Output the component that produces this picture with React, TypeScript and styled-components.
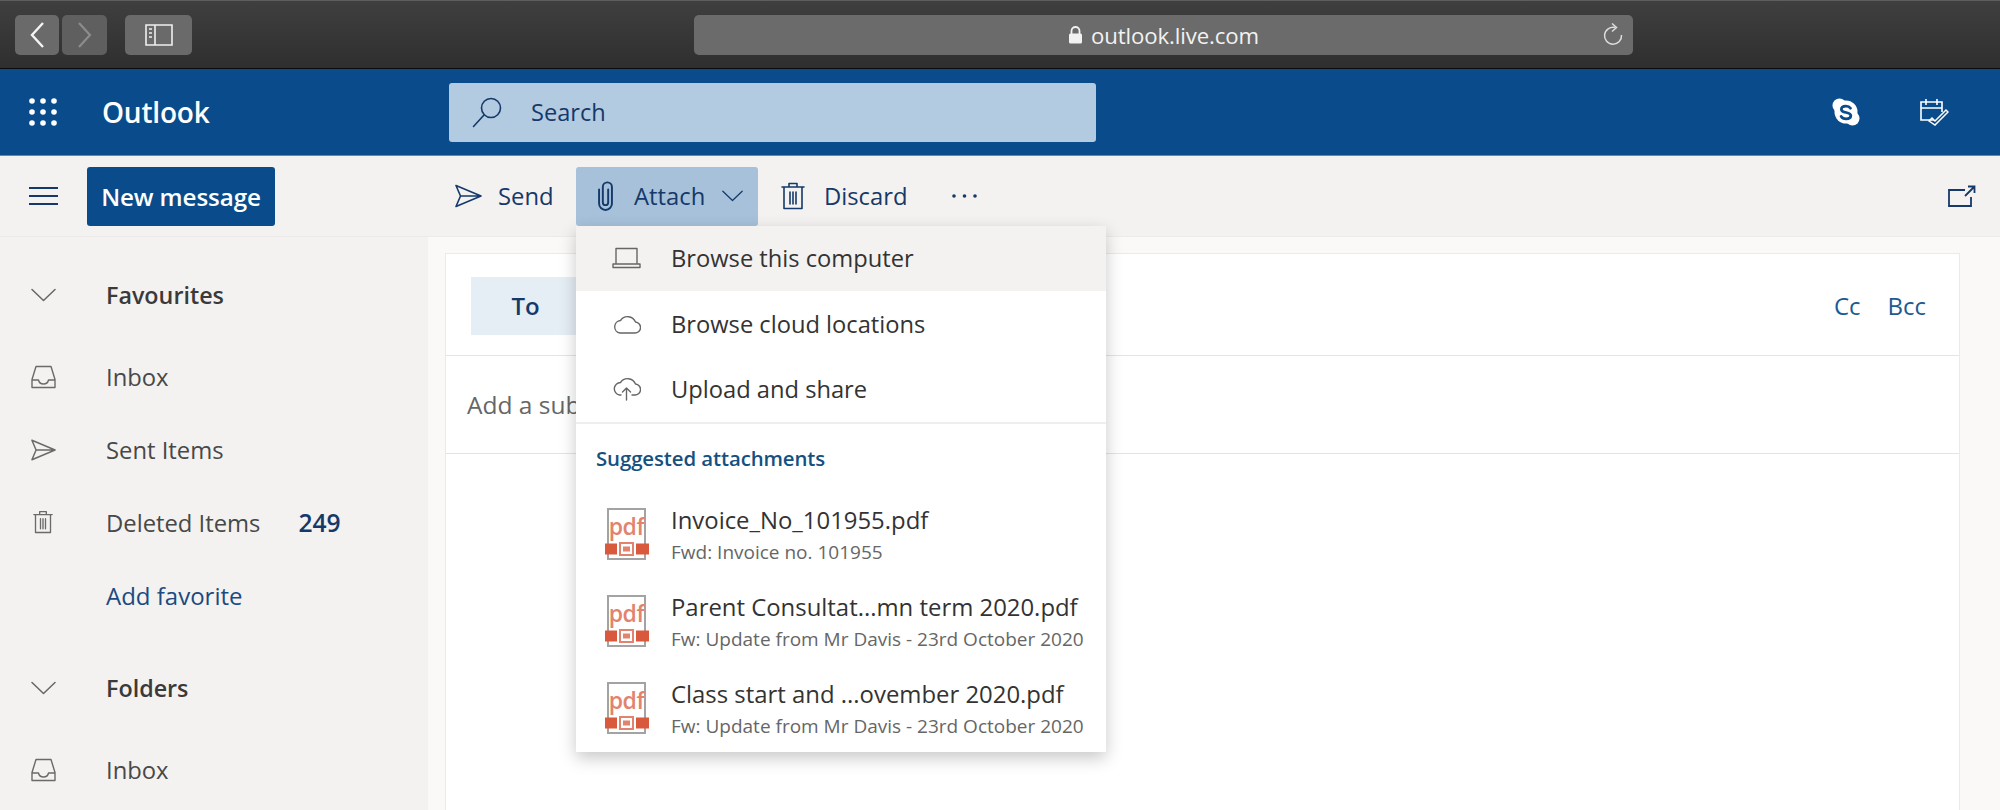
import React from 'react';
import styled, { createGlobalStyle } from 'styled-components';

const Colors = {
	brand: '#0a4c8b',
	navy: '#15396a',
	text: '#333333',
	muted: '#666666',
	pane: '#f3f2f1',
	paneLight: '#faf9f8',
	line: '#e6e5e4',
};

const GlobalStyle = createGlobalStyle`
	html, body {
		margin: 0;
		padding: 0;
		background: #fff;
		font-family: "Open Sans", "Noto Sans", sans-serif;
	}
	* { box-sizing: border-box; }
`;

const Page = styled.div`
	width: 2000px;
	height: 810px;
	overflow: hidden;
	display: flex;
	flex-direction: column;
`;

/* browser chrome */
const BrowserBar = styled.div`
	height: 69px;
	flex: none;
	display: flex;
	align-items: flex-start;
	padding: 14px 0 0 15px;
	background: linear-gradient(#3f3f3f, #2f2f2f);
	border-top: 1px solid #5e5e5e;
	border-bottom: 1px solid #0c0c0c;
`;

const ChromeButton = styled.div<{ $w: number; $gap: number; $dim?: boolean }>`
	width: ${(p) => p.$w}px;
	height: 40px;
	margin-right: ${(p) => p.$gap}px;
	border-radius: 5px;
	background: ${(p) => (p.$dim ? '#5f5f5f' : '#6a6a6a')};
	display: flex;
	align-items: center;
	justify-content: center;
`;

const AddressBar = styled.div`
	width: 939px;
	height: 40px;
	margin-left: 502px;
	border-radius: 5px;
	background: #6b6b6b;
	position: relative;
	display: flex;
	align-items: center;
	justify-content: center;
	gap: 8px;
	color: #f2f2f2;
	font-size: 22.2px;
	letter-spacing: -0.1px;
`;

const ReloadSlot = styled.div`
	position: absolute;
	right: 9px;
	top: 8px;
	height: 24px;
	display: flex;
`;

/* blue app header */
const Header = styled.div`
	height: 87px;
	flex: none;
	display: flex;
	align-items: center;
	background: ${Colors.brand};
	border-bottom: 1px solid #5b8ab8;
`;

const Brand = styled.div`
	width: 449px;
	flex: none;
	display: flex;
	align-items: center;
	padding-left: 29px;
	gap: 45px;
	color: #fff;
	font-size: 28px;
	font-weight: 600;
	letter-spacing: -0.2px;
`;

const SearchBox = styled.div`
	width: 647px;
	height: 59px;
	flex: none;
	display: flex;
	align-items: center;
	gap: 29px;
	padding-left: 23px;
	border-radius: 3px;
	background: #b3cbe1;
	color: ${Colors.navy};
	font-size: 23.6px;
`;

const HeaderIcons = styled.div`
	margin-left: auto;
	display: flex;
	align-items: center;
	gap: 59px;
	padding-right: 51px;
	color: #fff;
`;

/* command bar */
const Toolbar = styled.div`
	height: 81px;
	flex: none;
	display: flex;
	align-items: center;
	background: ${Colors.pane};
	border-bottom: 1px solid #ecebea;
	color: ${Colors.navy};
	font-size: 23.8px;
	position: relative;
	z-index: 5;
`;

const ToolbarLeft = styled.div`
	width: 449px;
	flex: none;
	display: flex;
	align-items: center;
	padding-left: 29px;
	gap: 29px;
`;

const NewMessage = styled.div`
	width: 188px;
	height: 59px;
	display: flex;
	align-items: center;
	justify-content: center;
	border-radius: 3px;
	background: ${Colors.brand};
	color: #fff;
	font-size: 24.2px;
	font-weight: 600;
	letter-spacing: -0.1px;
`;

const Action = styled.div<{ $w: number; $active?: boolean; $gap?: number }>`
	width: ${(p) => p.$w}px;
	height: 59px;
	display: flex;
	align-items: center;
	gap: ${(p) => p.$gap ?? 16}px;
	padding-left: ${(p) => (p.$active ? 22 : 6)}px;
	border-radius: 3px;
	background: ${(p) => (p.$active ? '#a7c1da' : 'transparent')};
`;

const AttachWrap = styled.div`
	position: relative;
	margin-left: 17px;
	margin-right: 17px;
`;

const ChevronShift = styled.span`
	margin-left: -4px;
	display: flex;
`;

const MoreDots = styled.div`
	margin-left: 43px;
	display: flex;
`;

const PopOut = styled.div`
	margin-left: auto;
	padding-right: 24px;
	display: flex;
`;

/* attach dropdown */
const Menu = styled.div`
	position: absolute;
	top: 100%;
	left: 0;
	width: 530px;
	height: 526px;
	background: #fff;
	box-shadow: 0 6px 16px rgba(0, 0, 0, 0.22);
	z-index: 10;
`;

const MenuRow = styled.div<{ $hover?: boolean }>`
	height: 65.5px;
	display: flex;
	align-items: center;
	padding-left: 36px;
	gap: 30px;
	background: ${(p) => (p.$hover ? Colors.pane : '#fff')};
	color: ${Colors.text};
	font-size: 23.7px;
`;

const MenuDivider = styled.div`
	height: 2px;
	background: #eeeeee;
`;

const MenuHeading = styled.div`
	height: 69px;
	display: flex;
	align-items: center;
	padding: 0 0 2px 20px;
	color: #15507f;
	font-size: 20.4px;
	font-weight: 600;
	letter-spacing: -0.1px;
`;

const AttachmentRow = styled.div`
	height: 87px;
	display: flex;
	align-items: flex-start;
	padding: 14px 0 0 29px;
	gap: 22px;
	&:last-child {
		height: 85px;
	}
`;

const AttachmentText = styled.div`
	margin-top: -4px;
	display: flex;
	flex-direction: column;
	white-space: nowrap;
`;

const AttachmentName = styled.div`
	height: 33px;
	line-height: 33px;
	color: ${Colors.text};
	font-size: 23.9px;
`;

const AttachmentSub = styled.div`
	height: 33px;
	line-height: 33px;
	color: ${Colors.muted};
	font-size: 19px;
`;

/* lower part */
const Body = styled.div`
	flex: 1;
	min-height: 0;
	display: flex;
	background: ${Colors.paneLight};
`;

const Sidebar = styled.div`
	width: 428px;
	flex: none;
	padding: 21px 0 0 31px;
	background: ${Colors.pane};
	font-size: 23.8px;
	color: #444;
`;

const SidebarRow = styled.div<{ $head?: boolean; $link?: boolean; $last?: boolean }>`
	height: 73px;
	display: flex;
	align-items: center;
	font-size: ${(p) => (p.$head ? 23.3 : p.$link ? 24 : 23.8)}px;
	font-weight: ${(p) => (p.$head ? 600 : 400)};
	color: ${(p) => (p.$head ? '#3a3a3a' : p.$link ? '#1c4a80' : '#484848')};
	margin-bottom: ${(p) => (p.$head ? 9 : p.$last ? 19 : 0)}px;
`;

const IconSlot = styled.div`
	width: 75px;
	flex: none;
	display: flex;
`;

const TrashOffset = styled.span`
	margin-left: 2px;
	display: flex;
`;

const Count = styled.span`
	margin-left: 38px;
	color: ${Colors.navy};
	font-size: 24.6px;
	font-weight: 600;
`;

const Compose = styled.div`
	width: 1515px;
	margin: 16px 0 0 17px;
	background: #fff;
	border: 1px solid #eaeaea;
	border-bottom: 0;
`;

const RecipientRow = styled.div`
	height: 102px;
	display: flex;
	align-items: flex-start;
	padding: 23px 33px 0 25px;
	border-bottom: 1px solid #e4e4e4;
	font-size: 24px;
`;

const ToChip = styled.div`
	width: 106px;
	height: 58px;
	display: flex;
	align-items: center;
	justify-content: center;
	padding: 0 0 2px 3px;
	background: #e6eef5;
	color: ${Colors.navy};
	font-weight: 600;
`;

const CopyLinks = styled.div`
	margin-left: auto;
	height: 58px;
	padding-bottom: 2px;
	display: flex;
	align-items: center;
	gap: 27px;
	color: #1c5a92;
`;

const SubjectRow = styled.div`
	height: 98px;
	display: flex;
	align-items: center;
	padding-left: 21px;
	border-bottom: 1px solid #e4e4e4;
	color: ${Colors.muted};
	font-size: 24.5px;
`;

/* drawings */
const Line = {
	fill: 'none',
	stroke: 'currentColor',
	strokeWidth: 1.6,
	strokeLinejoin: 'round' as const,
	strokeLinecap: 'round' as const,
};

const Chevron = ({ w, color }: { w: number; color: string }) => (
	<svg width={w} height={w * 0.56} viewBox="0 0 25 14" style={{ color }}>
		<path d="M1 1.5 12.5 12.5 24 1.5" {...Line} strokeWidth={1.5} />
	</svg>
);

const SendIcon = ({ color, w = 27 }: { color: string; w?: number }) => (
	<svg width={w} height={24} viewBox="0 0 27 24" style={{ color }}>
		<path d="M1 1.5 26 12 1 22.5 5.500 12zM5.500 12H26" {...Line} />
	</svg>
);

const TrashIcon = ({ color, w = 24, h = 29 }: { color: string; w?: number; h?: number }) => (
	<svg width={w} height={h} viewBox="0 0 24 29" style={{ color }}>
		<path d="M1 5h22M8 5V1.500h8V5M3 5v21.500h18V5M9 10v12M12 10v12M15 10v12" {...Line} />
	</svg>
);

const InboxIcon = () => (
	<svg width={25} height={24} viewBox="0 0 25 24" style={{ color: '#6a6a6a' }}>
		<path d="M5 1.500h15l4 13v8H1v-8zM1 15h6.500c.5 2.500 2.500 4 5 4s4.500-1.500 5-4H24" {...Line} strokeWidth={1.4} />
	</svg>
);

const SkypeLogo = () => (
	<svg width={28} height={28} viewBox="0 0 28 28">
		<circle cx="14" cy="14" r="11.500" fill="#fff" />
		<circle cx="7.500" cy="7.500" r="7" fill="#fff" />
		<circle cx="20.500" cy="20.500" r="7" fill="#fff" />
		<path
			d="M18.500 10.200c-1-1.400-2.600-2-4.600-2-2.800 0-4.500 1.400-4.500 3.200 0 4 9.400 2.200 9.400 6.200 0 1.900-1.900 3.300-4.700 3.300-2.400 0-4-.8-5-2.500"
			fill="none"
			stroke={Colors.brand}
			strokeWidth={2.8}
			strokeLinecap="round"
		/>
	</svg>
);

const Pdf = () => (
	<svg width={44} height={54} viewBox="0 0 44 54">
		<path d="M3 37V2h37v35M3 47v5h37v-5" fill="none" stroke="#a3a3a3" strokeWidth={2} />
		<text x="21.500" y="28" textAnchor="middle" fontFamily="Open Sans, sans-serif" fontSize="23" fontWeight="600" letterSpacing="-0.5" fill="#e2836e">pdf</text>
		<rect x="0" y="36.500" width="12" height="11" fill="#d9593c" />
		<rect x="31" y="36.500" width="13" height="11" fill="#d9593c" />
		<rect x="15" y="36" width="13" height="12" fill="none" stroke="#e2836e" strokeWidth={2} />
		<rect x="18" y="39.500" width="7" height="5" fill="#e2836e" />
	</svg>
);

const attachments = [
	{ name: 'Invoice_No_101955.pdf', sub: 'Fwd: Invoice no. 101955' },
	{ name: 'Parent Consultat...mn term 2020.pdf', sub: 'Fw: Update from Mr Davis - 23rd October 2020' },
	{ name: 'Class start and ...ovember 2020.pdf', sub: 'Fw: Update from Mr Davis - 23rd October 2020' },
];

export default function App() {
	return (
		<Page>
			<GlobalStyle />
			<BrowserBar>
				<ChromeButton $w={44} $gap={3}>
					<svg width={16} height={28} viewBox="0 0 16 28">
						<path d="M14 2 3 14l11 12" fill="none" stroke="#f4f4f4" strokeWidth={2.4} />
					</svg>
				</ChromeButton>
				<ChromeButton $w={45} $gap={18} $dim>
					<svg width={16} height={28} viewBox="0 0 16 28">
						<path d="M2 2l11 12L2 26" fill="none" stroke="#8c8c8c" strokeWidth={2.2} />
					</svg>
				</ChromeButton>
				<ChromeButton $w={67} $gap={0}>
					<svg width={28} height={22} viewBox="0 0 28 22">
						<path d="M1 1h26v20H1zM10 1v20" fill="none" stroke="#efefef" strokeWidth={1.6} />
						<path d="M4 5h3M4 9h3M4 13h3" stroke="#efefef" strokeWidth={1.6} />
					</svg>
				</ChromeButton>
				<AddressBar>
					<svg width={15} height={18} viewBox="0 0 15 18">
						<path d="M3.500 8V5a4 4 0 0 1 8 0v3" fill="none" stroke="#f2f2f2" strokeWidth={1.8} />
						<rect x="1" y="7.500" width="13" height="10" rx="1.500" fill="#f2f2f2" />
					</svg>
					outlook.live.com
					<ReloadSlot>
						<svg width={22} height={24} viewBox="0 0 22 24">
							<path d="M13 4.500A8.500 8.500 0 1 0 19.500 12" fill="none" stroke="#dcdcdc" strokeWidth={1.5} />
							<path d="M10 .5l4.500 4-4.500 4" fill="none" stroke="#dcdcdc" strokeWidth={1.5} />
						</svg>
					</ReloadSlot>
				</AddressBar>
			</BrowserBar>

			<Header>
				<Brand>
					<svg width={28} height={28} viewBox="0 0 28 28" fill="#fff">
						{[3, 14, 25].flatMap((y) =>
							[3, 14, 25].map((x) => <circle key={`${x}-${y}`} cx={x} cy={y} r={2.8} />),
						)}
					</svg>
					Outlook
				</Brand>
				<SearchBox>
					<svg width={30} height={31} viewBox="0 0 30 31" style={{ color: Colors.navy }}>
						<circle cx="19" cy="11" r="9.500" {...Line} />
						<path d="M12 18 1.500 29.500" {...Line} />
					</svg>
					Search
				</SearchBox>
				<HeaderIcons>
					<SkypeLogo />
					<svg width={30} height={30} viewBox="0 0 30 30">
						<path d="M15 23H2V5h21v10M2 11h21M7 2v6M18 2v6" fill="none" stroke="#fff" strokeWidth={1.6} />
						<path d="M10 24l3-3 3 3 11-11 2 2-13 13z" fill="none" stroke="#fff" strokeWidth={1.5} />
					</svg>
				</HeaderIcons>
			</Header>

			<Toolbar>
				<ToolbarLeft>
					<svg width={29} height={18} viewBox="0 0 29 18" style={{ color: Colors.navy, flex: 'none' }}>
						<path d="M0 1h29M0 9h29M0 17h29" stroke="currentColor" strokeWidth={1.8} />
					</svg>
					<NewMessage>New message</NewMessage>
				</ToolbarLeft>
				<Action $w={110} $gap={16}>
					<SendIcon color={Colors.navy} />
					Send
				</Action>
				<AttachWrap>
					<Action $w={182} $active $gap={21}>
						<svg width={15} height={30} viewBox="0 0 14 28" style={{ color: Colors.navy }}>
							<path d="M9.500 8V20a2.500 2.500 0 0 1-5 0V5.500a4.250 4.250 0 0 1 8.500 0V21a6 6 0 0 1-12 0V8" {...Line} strokeWidth={1.8} />
						</svg>
						Attach
						<ChevronShift>
							<Chevron w={21} color={Colors.navy} />
						</ChevronShift>
					</Action>
					<Menu>
						<MenuRow $hover>
							<svg width={29} height={22} viewBox="0 0 29 22" style={{ color: '#666', flex: 'none' }}>
								<path d="M4 16V1.500h21V16M1 17h27v3.500H1z" {...Line} strokeWidth={1.4} />
							</svg>
							Browse this computer
						</MenuRow>
						<MenuRow>
							<svg width={29} height={20} viewBox="0 0 29 20" style={{ color: '#666', flex: 'none' }}>
								<path d="M8 19h14.500a5.500 5.500 0 0 0 1-11A8.500 8.500 0 0 0 8.500 6.500 6.300 6.300 0 0 0 8 19z" {...Line} strokeWidth={1.4} />
							</svg>
							Browse cloud locations
						</MenuRow>
						<MenuRow>
							<svg width={29} height={24} viewBox="0 0 29 24" style={{ color: '#666', flex: 'none' }}>
								<path d="M9 18H7.500A6.300 6.300 0 0 1 8.500 5.500 8.500 8.500 0 0 1 23.500 7a5.500 5.500 0 0 1-1 11H20M14.500 23V11M10.500 15l4-4 4 4" {...Line} strokeWidth={1.4} />
							</svg>
							Upload and share
						</MenuRow>
						<MenuDivider />
						<MenuHeading>Suggested attachments</MenuHeading>
						{attachments.map((a) => (
							<AttachmentRow key={a.name}>
								<Pdf />
								<AttachmentText>
									<AttachmentName>{a.name}</AttachmentName>
									<AttachmentSub>{a.sub}</AttachmentSub>
								</AttachmentText>
							</AttachmentRow>
						))}
					</Menu>
				</AttachWrap>
				<Action $w={134} $gap={19}>
					<TrashIcon color={Colors.navy} />
					Discard
				</Action>
				<MoreDots>
					<svg width={25} height={4} viewBox="0 0 25 4" fill={Colors.navy}>
						<circle cx="2" cy="2" r="1.800" />
						<circle cx="12.500" cy="2" r="1.800" />
						<circle cx="23" cy="2" r="1.800" />
					</svg>
				</MoreDots>
				<PopOut>
					<svg width={28} height={22} viewBox="0 0 28 22" style={{ color: Colors.navy }}>
						<path d="M17 5H1v16h22v-9M17 11 26 2M20 1.500h6.500V8" fill="none" stroke="currentColor" strokeWidth={1.8} />
					</svg>
				</PopOut>
			</Toolbar>

			<Body>
				<Sidebar>
					<SidebarRow $head>
						<IconSlot><Chevron w={25} color="#666" /></IconSlot>
						Favourites
					</SidebarRow>
					<SidebarRow>
						<IconSlot><InboxIcon /></IconSlot>
						Inbox
					</SidebarRow>
					<SidebarRow>
						<IconSlot><SendIcon color="#6a6a6a" w={25} /></IconSlot>
						Sent Items
					</SidebarRow>
					<SidebarRow>
						<IconSlot>
							<TrashOffset>
								<TrashIcon color="#6a6a6a" w={20} h={25} />
							</TrashOffset>
						</IconSlot>
						Deleted Items
						<Count>249</Count>
					</SidebarRow>
					<SidebarRow $link $last>
						<IconSlot />
						Add favorite
					</SidebarRow>
					<SidebarRow $head>
						<IconSlot><Chevron w={25} color="#666" /></IconSlot>
						Folders
					</SidebarRow>
					<SidebarRow>
						<IconSlot><InboxIcon /></IconSlot>
						Inbox
					</SidebarRow>
				</Sidebar>
				<Compose>
					<RecipientRow>
						<ToChip>To</ToChip>
						<CopyLinks>
							<span>Cc</span>
							<span>Bcc</span>
						</CopyLinks>
					</RecipientRow>
					<SubjectRow>Add a subject</SubjectRow>
				</Compose>
			</Body>
		</Page>
	);
}
